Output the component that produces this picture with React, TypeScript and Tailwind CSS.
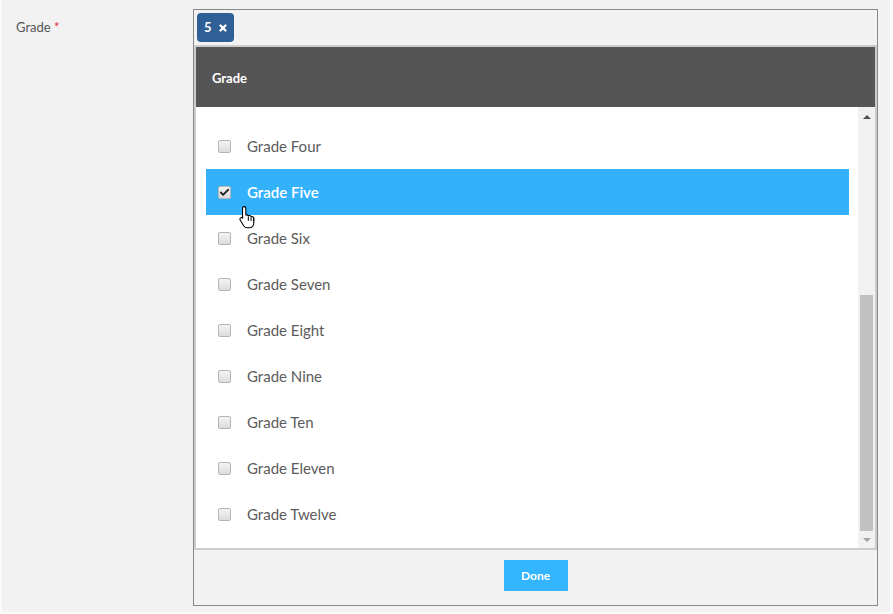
import { Check, X } from "lucide-react";

const GRADES = [
  { id: "four", name: "Grade Four" },
  { id: "five", name: "Grade Five", checked: true },
  { id: "six", name: "Grade Six" },
  { id: "seven", name: "Grade Seven" },
  { id: "eight", name: "Grade Eight" },
  { id: "nine", name: "Grade Nine" },
  { id: "ten", name: "Grade Ten" },
  { id: "eleven", name: "Grade Eleven" },
  { id: "twelve", name: "Grade Twelve" },
];

function HandCursor() {
  return (
    <svg width="20" height="24" viewBox="0 0 18 22" className="absolute left-[32px] top-[36px]">
      <path
        d="M5.5 1.5c.8 0 1.5.7 1.5 1.5v6.2l.4-.1c.8-.2 1.6.2 1.9.9.5-.4 1.3-.5 1.9-.1.3.2.5.5.6.8.6-.3 1.4-.2 1.9.3.4.3.6.8.6 1.3v4.2c0 2.4-1.7 4.3-4 4.3H8.2c-1.2 0-2.3-.6-3-1.6L1.9 14c-.5-.7-.4-1.7.3-2.2.6-.5 1.5-.4 2 .2l-.2.1V3c0-.8.7-1.5 1.5-1.5z"
        fill="#fff"
        stroke="#000"
        strokeWidth="1"
        strokeLinejoin="round"
      />
      <path d="M9.3 10.5v4M11.8 11.3v3.3M14.3 12.2v2.6" stroke="#000" strokeWidth="0.9" />
    </svg>
  );
}

export default function App() {
  return (
    <div className="w-[893px] h-[614px] bg-[#fafafa] font-['Lato',sans-serif] overflow-hidden">
      <div className="ml-[2px] w-[888px] h-[612px] bg-[#f2f2f2] flex">
        {/* Label */}
        <div className="w-[191px] pl-[14px] pt-[18px] text-[13px] text-[#555]">
          Grade <span className="text-[#e0303a]">*</span>
        </div>

        {/* Select box */}
        <div className="mt-[9px] w-[685px] h-[597px] border border-[#888] flex flex-col">
          <div className="h-[35px] pl-[3px] pt-[3px]">
            <span className="inline-flex items-center gap-[6px] h-[29px] pl-[7px] pr-[6px] rounded-[4px] bg-[#2f6095] text-white text-[13px] font-bold">
              5
              <X className="w-[10px] h-[10px]" strokeWidth={5.5} />
            </span>
          </div>

          {/* Dropdown panel */}
          <div className="h-[505px] border-2 border-[#cccccc] flex flex-col">
            <div className="h-[60px] bg-[#555555] pl-[16px] pt-[3px] flex items-center text-white text-[13px] font-bold">
              Grade
            </div>
            <div className="flex-1 bg-white flex">
              <div className="flex-1 pl-[10px] pr-[9px] pt-[16px]">
                {GRADES.map((grade) => (
                  <div
                    key={grade.id}
                    className={
                      grade.checked
                        ? "relative h-[46px] pl-[12px] flex items-center gap-[16px] bg-[#33b2fb] text-white"
                        : "relative h-[46px] pl-[12px] flex items-center gap-[16px] text-[#5b5b5b]"
                    }
                  >
                    <span className="w-[13px] h-[13px] rounded-[2px] border border-[#b5b5b5] bg-gradient-to-b from-[#f4f4f4] to-[#dcdcdc] flex items-center justify-center">
                      {grade.checked && <Check className="w-[11px] h-[11px] text-[#222]" strokeWidth={4} />}
                    </span>
                    <span className={grade.checked ? "text-[15px] font-semibold" : "text-[15px]"}>
                      {grade.name}
                    </span>
                    {grade.checked && <HandCursor />}
                  </div>
                ))}
              </div>

              {/* Scrollbar */}
              <div className="w-[17px] bg-[#f1f1f1] flex flex-col items-center">
                <div className="h-[17px] flex items-center justify-center mt-[1px]">
                  <div className="w-0 h-0 border-l-[4px] border-r-[4px] border-b-[4px] border-l-transparent border-r-transparent border-b-[#505050]" />
                </div>
                <div className="flex-1" />
                <div className="w-[13px] h-[236px] bg-[#c1c1c1]" />
                <div className="h-[17px] flex items-center justify-center">
                  <div className="w-0 h-0 border-l-[4px] border-r-[4px] border-t-[4px] border-l-transparent border-r-transparent border-t-[#a3a3a3]" />
                </div>
              </div>
            </div>
          </div>

          {/* Footer */}
          <div className="flex-1 flex justify-center pt-[10px]">
            <button className="w-[64px] h-[31px] bg-[#33b5ff] text-white text-[12px] font-bold">
              Done
            </button>
          </div>
        </div>
      </div>
    </div>
  );
}
